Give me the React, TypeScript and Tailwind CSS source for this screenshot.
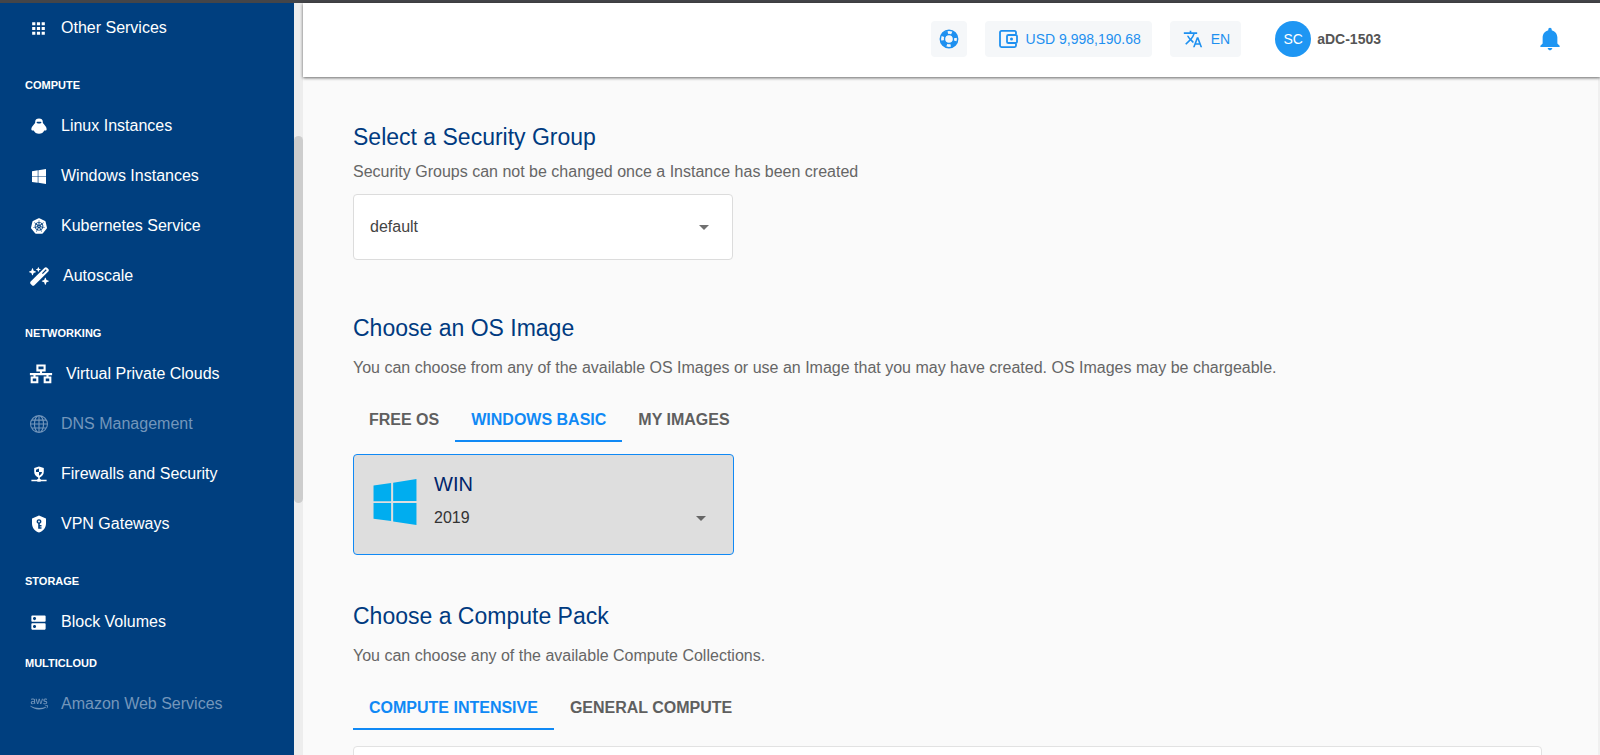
import { FaAws } from "react-icons/fa";
import { FaWandMagicSparkles } from "react-icons/fa6";
import { BsGlobe } from "react-icons/bs";
import { SiKubernetes } from "react-icons/si";
import { MdApps, MdTranslate, MdArrowDropDown, MdDns } from "react-icons/md";
import { IoMdNotifications } from "react-icons/io";
import type { ReactNode } from "react";

const svg = "h-4 w-4 shrink-0";

function Tux() {
  return (
    <svg viewBox="0 0 16 16" className={svg} fill="currentColor" aria-hidden="true">
      <path fillRule="evenodd" d="M8 .6c-2.300 0-3.800 1.200-3.800 3.100 0 1-.2 1.500-.8 2.100L1.500 8.300C.6 9.400.3 10.700.4 11.700c.4.900 1.400 1 2.300.7.8 2 2.900 3.300 5.300 3.300s4.500-1.300 5.300-3.300c.9.300 1.900.2 2.300-.7.1-1-.2-2.300-1.100-3.400L12.600 5.800c-.6-.6-.8-1.100-.8-2.100C11.800 1.800 10.300.6 8 .6ZM6.300 3.700h3.400c.4 0 .7.300.7.700 0 .7-1.100 1.200-2.400 1.200S5.600 5.100 5.600 4.400c0-.4.3-.7.7-.7Z" />
    </svg>
  );
}

function WindowsMark({ className }: { className: string }) {
  return (
    <svg viewBox="0 0 42 45" className={className} fill="currentColor" aria-hidden="true">
      <path d="M0 6.400 17.200 4v17.700H0ZM19.200 3.700 42 0v21.600H19.200ZM0 23.600h17.200v17.600L0 38.800ZM19.200 23.600H42V45l-22.800-3.500Z" />
    </svg>
  );
}

function Lan() {
  return (
    <svg viewBox="0 0 23 20" className="h-5 w-6 shrink-0" fill="none" stroke="currentColor" strokeWidth="2.100" aria-hidden="true">
      <path d="M7.900 1.500h7.200v4.900H7.900ZM2.200 13.500h5.600v4.700H2.200ZM15.200 13.500h5.600v4.700h-5.600ZM11.500 6.400v3.700M.4 10.100h22.200M5 10.100v3.400M18 10.100v3.400" />
    </svg>
  );
}

function Firewall() {
  return (
    <svg viewBox="0 0 16 16" className={svg} fill="currentColor" aria-hidden="true">
      <path fillRule="evenodd" d="M8 .4 3.200 2.100v3.700c0 2.700 1.700 4.800 4 5.700v1.600H6.300v.6H.4v1.500h5.900v.6h3.400v-.6h5.900v-1.500H9.700v-.6h-.9v-1.600c2.300-.9 4-3 4-5.700V2.100ZM8 2.600v3.500h3c-.2 1.600-1.400 3-3 3.700V6.100H5V3.700Z" />
    </svg>
  );
}

function ShieldKey() {
  return (
    <svg viewBox="0 0 16 18" className="h-[18px] w-4 shrink-0" fill="currentColor" aria-hidden="true">
      <path fillRule="evenodd" d="M8 .5 1 3.500v4.900c0 4.200 3 7.900 7 9.100 4-1.200 7-4.900 7-9.100V3.500ZM8 4.200a2.300 2.300 0 0 1 .8 4.500v1.300h1.700v1.500H8.800v.8h1.700v1.500H7.200V8.700A2.300 2.300 0 0 1 8 4.200Zm0 1.400a.9.9 0 1 0 0 1.800.9.900 0 0 0 0-1.800Z" />
    </svg>
  );
}

function Lifebuoy() {
  return (
    <svg viewBox="0 0 20 20" className="h-5 w-5 shrink-0" fill="none" stroke="currentColor" aria-hidden="true">
      <circle cx="10" cy="10" r="8.700" strokeWidth="1.500" />
      <circle cx="10" cy="10" r="4.500" strokeWidth="1.400" />
      <circle cx="10" cy="10" r="6.500" strokeWidth="4" strokeDasharray="6.200 4.010" strokeDashoffset="-2.005" />
    </svg>
  );
}

function Wallet() {
  return (
    <svg viewBox="0 0 20 20" className="h-5 w-5 shrink-0" fill="none" stroke="currentColor" strokeWidth="1.800" aria-hidden="true">
      <path d="M18 5.200V3.400c0-.9-.6-1.500-1.500-1.500h-13c-.9 0-1.500.6-1.500 1.500v13.200c0 .9.600 1.500 1.500 1.500h13c.9 0 1.500-.6 1.500-1.500v-1.800" />
      <path d="M10.400 6h7.200c.8 0 1.400.5 1.400 1.300v5.400c0 .8-.6 1.300-1.400 1.300h-7.200c-.8 0-1.400-.5-1.400-1.300V7.300C9 6.500 9.600 6 10.400 6Z" />
      <circle cx="13.500" cy="10" r="1.500" fill="currentColor" stroke="none" />
    </svg>
  );
}

type Item = { label: string; icon: ReactNode; muted?: boolean };

function NavItem({ label, icon, muted }: Item) {
  return (
    <li>
      <a
        href="#"
        className={
          muted
            ? "flex h-[50px] items-center gap-[13px] pl-[29px] text-[#7396bb]"
            : "flex h-[50px] items-center gap-[13px] pl-[29px] text-white"
        }
      >
        <span className="flex min-w-[19px] items-center justify-center">{icon}</span>
        <span>{label}</span>
      </a>
    </li>
  );
}

function NavGroup({ title, items, tight }: { title: string; items: Item[]; tight?: boolean }) {
  return (
    <section className={tight ? "" : "pt-4"}>
      <h2 className="flex h-8 items-center pl-[25px] text-[11px] font-bold">{title}</h2>
      <ul>
        {items.map((i) => (
          <NavItem key={i.label} {...i} />
        ))}
      </ul>
    </section>
  );
}

function Tabs({ tabs, active, label }: { tabs: string[]; active: string; label: string }) {
  return (
    <div role="tablist" aria-label={label} className="mt-[19px] flex">
      {tabs.map((t) => (
        <button
          key={t}
          role="tab"
          aria-selected={t === active}
          className={
            t === active
              ? "h-[43px] border-b-2 border-[#1089f5] px-4 text-base font-bold text-[#1089f5]"
              : "h-[43px] border-b-2 border-transparent px-4 text-base font-bold text-[#5f5f5f]"
          }
        >
          {t}
        </button>
      ))}
    </div>
  );
}

export default function App() {
  return (
    <div className="flex h-screen flex-col overflow-hidden bg-[#fafafa] font-['Liberation_Sans',Arial,sans-serif] text-base">
      <div className="h-[3px] shrink-0 bg-[#444549]" />
      <div className="flex min-h-0 flex-1">
        <nav aria-label="Services" className="w-[294px] shrink-0 overflow-hidden bg-[#003f7f] text-white">
          <ul>
            <NavItem label="Other Services" icon={<MdApps className="h-[19px] w-[19px]" />} />
          </ul>
          <NavGroup
            title="COMPUTE"
            items={[
              { label: "Linux Instances", icon: <Tux /> },
              { label: "Windows Instances", icon: <WindowsMark className="h-[15px] w-[14px]" /> },
              { label: "Kubernetes Service", icon: <SiKubernetes className="h-4 w-4" /> },
              { label: "Autoscale", icon: <FaWandMagicSparkles className="h-[19px] w-[21px]" /> },
            ]}
          />
          <NavGroup
            title="NETWORKING"
            items={[
              { label: "Virtual Private Clouds", icon: <Lan /> },
              { label: "DNS Management", icon: <BsGlobe className="h-[18px] w-[18px]" />, muted: true },
              { label: "Firewalls and Security", icon: <Firewall /> },
              { label: "VPN Gateways", icon: <ShieldKey /> },
            ]}
          />
          <NavGroup title="STORAGE" items={[{ label: "Block Volumes", icon: <MdDns className="h-[19px] w-[19px]" /> }]} />
          <NavGroup title="MULTICLOUD" tight items={[{ label: "Amazon Web Services", icon: <FaAws className="h-[18px] w-[18px]" />, muted: true }]} />
        </nav>
        <div className="w-[9px] shrink-0 bg-[#ededed] pt-[133px]">
          <div className="h-[367px] rounded-full bg-[#cdcdcd]" />
        </div>
        <div className="flex min-w-0 flex-1 flex-col">
          <header className="z-10 flex h-[74px] shrink-0 items-center bg-white pb-0.5 pr-9 text-sm text-[#1e90f0] shadow-[0_1px_3px_rgba(0,0,0,0.6)]">
            <div className="ml-auto flex items-center gap-[18px]">
              <button aria-label="Support" className="flex h-9 w-9 items-center justify-center rounded bg-[#f5f7f9]">
                <Lifebuoy />
              </button>
              <button className="flex h-9 items-center gap-2 rounded bg-[#f5f7f9] pl-[13px] pr-[11px]">
                <Wallet />
                USD 9,998,190.68
              </button>
              <button className="flex h-9 items-center gap-2 rounded bg-[#f5f7f9] pl-[13px] pr-[11px]">
                <MdTranslate className="h-5 w-5" />
                EN
              </button>
            </div>
            <button className="ml-[34px] flex items-center gap-[6px] font-bold text-[#555]">
              <span className="flex h-9 w-9 items-center justify-center rounded-full bg-[#1e96f3] font-normal text-white">SC</span>
              aDC-1503
            </button>
            <button aria-label="Notifications" className="ml-[155px]">
              <IoMdNotifications className="h-7 w-7 text-[#1e96f3]" />
            </button>
          </header>
          <main className="min-h-0 flex-1 overflow-hidden border-r-2 border-[#f0f0f0] pl-[50px] pr-14 pt-11 text-[#666]">
            <section>
              <h1 className="text-[23px] leading-8 text-[#003a80]">Select a Security Group</h1>
              <p className="mt-[7px] leading-6">Security Groups can not be changed once a Instance has been created</p>
              <div className="mt-[10px] grid w-[380px] items-center rounded border border-[#dcdcdc] bg-white">
                <select aria-label="Security group" className="col-start-1 row-start-1 h-16 appearance-none bg-transparent px-4 text-[#444]">
                  <option>default</option>
                </select>
                <MdArrowDropDown className="pointer-events-none col-start-1 row-start-1 mr-4 h-6 w-6 justify-self-end text-[#707070]" />
              </div>
            </section>
            <section className="mt-[52px]">
              <h1 className="text-[23px] leading-8 text-[#003a80]">Choose an OS Image</h1>
              <p className="mt-3 leading-6">
                You can choose from any of the available OS Images or use an Image that you may have created. OS Images may be chargeable.
              </p>
              <Tabs label="OS image" tabs={["FREE OS", "WINDOWS BASIC", "MY IMAGES"]} active="WINDOWS BASIC" />
              <div className="mt-3 flex h-[101px] w-[381px] rounded border border-[#1089f5] bg-[#dedede] pl-[18px] pt-[15px]">
                <WindowsMark className="mt-[9px] h-[46px] w-[46px] text-[#00adef]" />
                <div className="ml-4 flex-1">
                  <h2 className="text-xl leading-7 text-[#00246b]">WIN</h2>
                  <div className="grid items-center">
                    <select aria-label="Windows version" className="col-start-1 row-start-1 mt-1 h-8 appearance-none bg-transparent text-[#333]">
                      <option>2019</option>
                    </select>
                    <MdArrowDropDown className="pointer-events-none col-start-1 row-start-1 mr-5 mt-1 h-6 w-6 justify-self-end text-[#666]" />
                  </div>
                </div>
              </div>
            </section>
            <section className="mt-[45px]">
              <h1 className="text-[23px] leading-8 text-[#003a80]">Choose a Compute Pack</h1>
              <p className="mt-3 leading-6">You can choose any of the available Compute Collections.</p>
              <Tabs label="Compute pack" tabs={["COMPUTE INTENSIVE", "GENERAL COMPUTE"]} active="COMPUTE INTENSIVE" />
              <div className="mt-4 h-40 rounded border border-[#e2e2e2] bg-white" />
            </section>
          </main>
        </div>
      </div>
    </div>
  );
}
